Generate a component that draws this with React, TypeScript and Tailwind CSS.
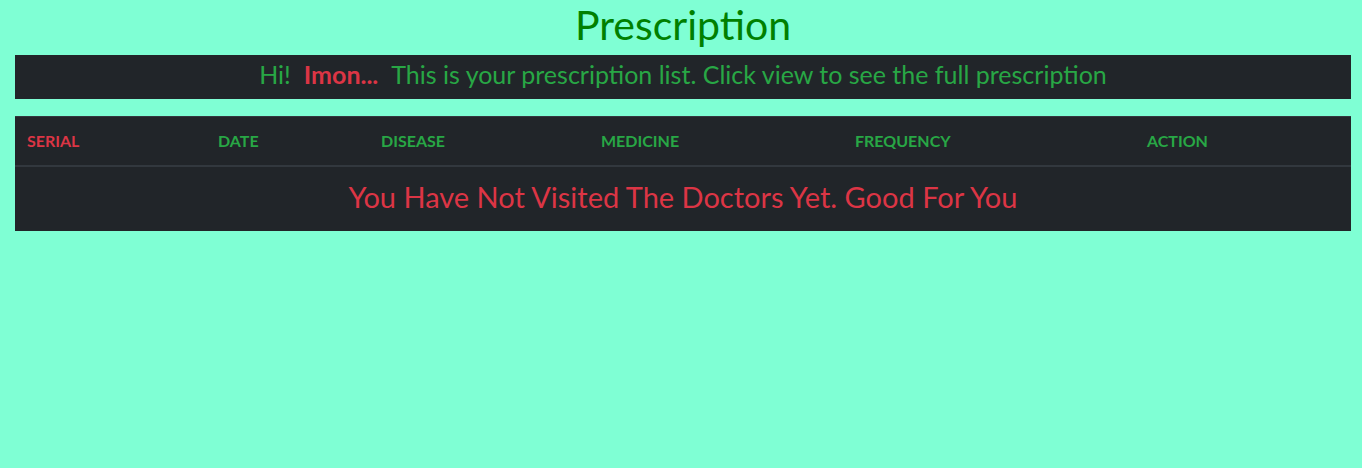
import React from "react";

const cols = [
  { label: "Serial", w: "w-[191px]", c: "text-[#dc3545]" },
  { label: "Date", w: "w-[163px]", c: "text-[#28a745]" },
  { label: "Disease", w: "w-[220px]", c: "text-[#28a745]" },
  { label: "Medicine", w: "w-[254px]", c: "text-[#28a745]" },
  { label: "Frequency", w: "w-[292px]", c: "text-[#28a745]" },
  { label: "Action", w: "flex-1", c: "text-[#28a745]" },
];

export default function App() {
  return (
    <div className="min-h-[468px] w-full bg-[#7fffd4] pl-[15px] pr-[11px] font-['Lato',sans-serif]">
      <h1 className="h-[55px] pt-[1px] text-center text-[41px] leading-[48px] text-[#008000]">
        Prescription
      </h1>
      <div className="flex h-[44px] items-center justify-center bg-[#212529] pb-[4px] text-[25px] text-[#28a745]">
        <span>Hi!</span>
        <span className="ml-[13px] font-bold text-[#dc3545]">Imon...</span>
        <span className="ml-[13px]">This is your prescription list. Click view to see the full prescription</span>
      </div>
      <div className="mt-[17px] border-t border-[#32383e] bg-[#212529]">
        <div className="flex h-[50px] items-center border-b-2 border-[#32383e] pl-[12px] text-[16px] font-bold uppercase">
          {cols.map((c) => (
            <div key={c.label} className={`${c.w} ${c.c}`}>
              {c.label}
            </div>
          ))}
        </div>
        <div className="flex h-[64px] items-center justify-center pb-[4px] text-[29px] text-[#dc3545]">
          You Have Not Visited The Doctors Yet. Good For You
        </div>
      </div>
    </div>
  );
}
